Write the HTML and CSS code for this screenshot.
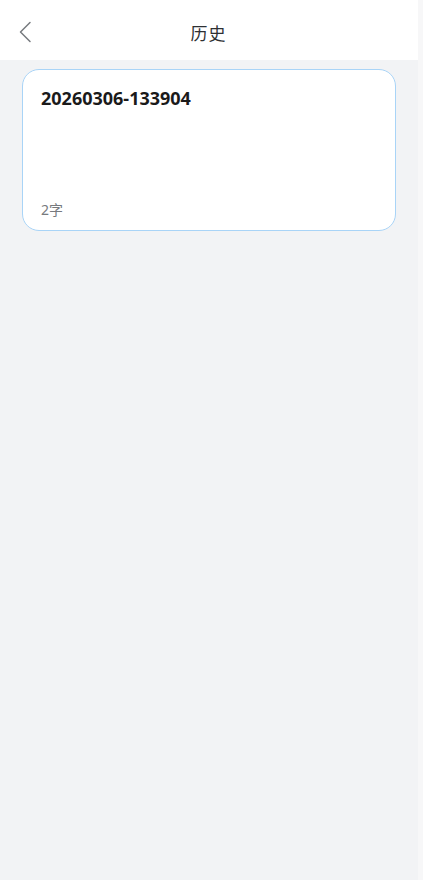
FILE: index.html
```html
<!DOCTYPE html>
<html lang="zh">
<head>
<meta charset="utf-8">
<link rel="stylesheet" href="styles.css">
</head>
<body>
<div class="app">
  <header class="topbar">
    <button class="back" aria-label="返回">
      <svg width="14" height="22" viewBox="0 0 14 22"><path d="M12 1.5 L2.5 11 L12 20.5" fill="none" stroke="#777a7f" stroke-width="1.5" stroke-linecap="round" stroke-linejoin="round"/></svg>
    </button>
    <h1 class="title">历史</h1>
    <span class="spacer"></span>
  </header>
  <main class="list">
    <article class="card">
      <div class="card-title">20260306-133904</div>
      <div class="card-meta">2字</div>
    </article>
  </main>
</div>
</body>
</html>
```
FILE: styles.css
```css
html, body {
  margin: 0;
  padding: 0;
  height: 100%;
}
body {
  background: #f7f7f8;
  font-family: "Noto Sans", "Noto Sans CJK SC", sans-serif;
}
.app {
  width: 418px;
  min-height: 880px;
  background: #f2f3f5;
}
.topbar {
  height: 60px;
  background: #ffffff;
  display: flex;
  align-items: center;
  justify-content: space-between;
  padding: 0 14px 0 13px;
  box-sizing: border-box;
}
.back {
  border: 0;
  background: none;
  padding: 0;
  width: 24px;
  height: 30px;
  display: flex;
  align-items: center;
  justify-content: center;
  margin-top: 3px;
}
.title {
  margin: 0;
  font-size: 17px;
  font-weight: 400;
  color: #2e3033;
  margin-top: 4px;
  letter-spacing: 1px;
}
.spacer {
  width: 24px;
}
.list {
  padding: 9px 22px;
}
.card {
  background: #ffffff;
  border: 1px solid #a9d4f7;
  border-radius: 17px;
  height: 162px;
  box-sizing: border-box;
  padding: 15px 18px 10px;
  display: flex;
  flex-direction: column;
  justify-content: space-between;
}
.card-title {
  font-size: 18px;
  font-weight: 700;
  color: #1a1a1a;
  line-height: 26px;
}
.card-meta {
  font-size: 14px;
  color: #777a7e;
  line-height: 20px;
}
```
